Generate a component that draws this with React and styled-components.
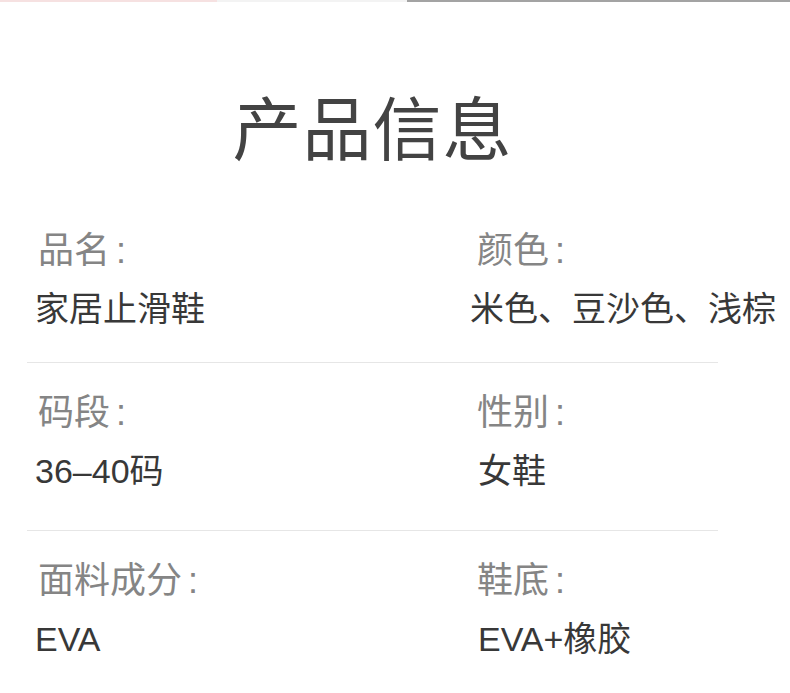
import React from "react";
import styled, { createGlobalStyle } from "styled-components";

const Global = createGlobalStyle`
  html, body { margin: 0; padding: 0; background: #fff; }
  body { font-family: "Liberation Sans", "Noto Sans CJK SC", sans-serif; }
`;

const Page = styled.div`
  width: 790px;
  height: 693px;
  overflow: hidden;
  background: #fff;
`;

const TopBar = styled.div`
  display: flex;
  height: 2px;
`;

const Segment = styled.div`
  width: ${(p) => p.$w}px;
  flex: ${(p) => (p.$grow ? 1 : "none")};
  background: ${(p) => p.$c};
`;

const Title = styled.h1`
  margin: 83px 0 0 0;
  text-align: center;
  padding-right: 45px;
  font-family: "Noto Sans CJK SC", sans-serif;
  font-weight: 400;
  font-size: 69px;
  line-height: 80px;
  letter-spacing: 1px;
  color: #434343;
`;

const Table = styled.div`
  margin: 62px 0 0 27px;
  width: 691px;
`;

const Row = styled.div`
  display: grid;
  grid-template-columns: 439px auto;
  padding: ${(p) => (p.$first ? "0 0 33px 8px" : "26px 0 39px 8px")};
  border-bottom: ${(p) => (p.$last ? "none" : "1px solid #e6e6e6")};
`;

const Cell = styled.div`
  display: flex;
  flex-direction: column;
  gap: 18px;
  white-space: nowrap;
`;

const Label = styled.div`
  font-family: "Noto Sans CJK SC", sans-serif;
  font-size: 36px;
  line-height: 40px;
  color: #858585;
  padding-left: 3px;
`;

const Colon = styled.span`
  font-family: "Liberation Sans", sans-serif;
  margin-left: 6px;
`;

const Value = styled.div`
  font-family: "Liberation Sans", "Noto Sans CJK SC", sans-serif;
  font-size: 34px;
  line-height: 40px;
  color: #383838;
  margin-left: ${(p) => p.$shift || 0}px;
`;

const rows = [
  [
    { label: "品名", value: "家居止滑鞋" },
    { label: "颜色", value: "米色、豆沙色、浅棕", shift: -4 },
  ],
  [
    { label: "码段", value: "36–40码" },
    { label: "性别", value: "女鞋", shift: 4 },
  ],
  [
    { label: "面料成分", value: "EVA" },
    { label: "鞋底", value: "EVA+橡胶", shift: 4 },
  ],
];

export default function App() {
  return (
    <Page>
      <Global />
      <TopBar>
        <Segment $w={217} $c="#f6e1e1" />
        <Segment $w={190} $c="#f3f3f3" />
        <Segment $grow $c="#a3a3a3" />
      </TopBar>
      <Title>产品信息</Title>
      <Table>
        {rows.map((r, i) => (
          <Row key={i} $first={i === 0} $last={i === rows.length - 1}>
            {r.map((c, j) => (
              <Cell key={j}>
                <Label>
                  {c.label}
                  <Colon>:</Colon>
                </Label>
                <Value $shift={c.shift}>{c.value}</Value>
              </Cell>
            ))}
          </Row>
        ))}
      </Table>
    </Page>
  );
}
